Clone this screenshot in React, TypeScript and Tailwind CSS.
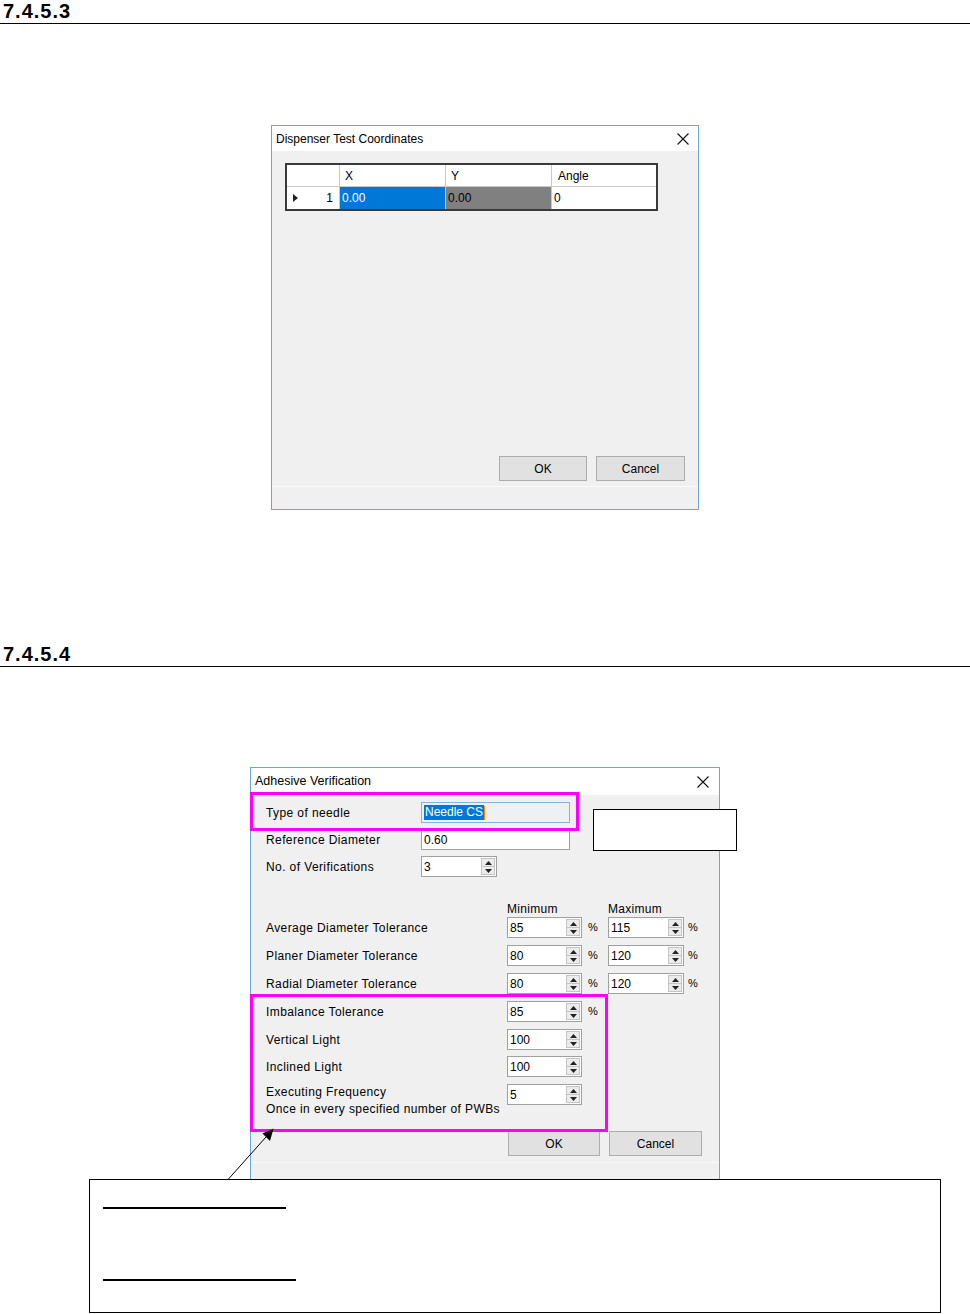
import React from "react"

const UI = { fontFamily: '"Liberation Sans", Arial, sans-serif' }

function CloseIcon() {
  return (
    <svg width="12" height="12" viewBox="0 0 12 12">
      <path d="M0.5 0.5 L11.5 11.5 M11.5 0.5 L0.5 11.5" stroke="#111" strokeWidth="1.1" />
    </svg>
  )
}

function Heading({ label }: { label: string }) {
  return (
    <div className="h-[24px] border-b border-black pt-[1px]">
      <div
        className="pl-[3px] text-[20px] font-bold leading-[21px] tracking-[1px] text-black"
        style={{ fontFamily: '"Liberation Sans", Arial, sans-serif' }}
      >
        {label}
      </div>
    </div>
  )
}

function WinButton({ label, w }: { label: string; w: string }) {
  return (
    <div
      className={`${w} flex h-[25px] items-center justify-center border border-[#adadad] bg-[#e1e1e1] text-[12px] text-black`}
    >
      {label}
    </div>
  )
}

function SpinArrows() {
  return (
    <div className="mr-[1px] flex h-[17px] w-[14px] flex-col border border-[#c4c4c4] bg-[#ececec]">
      <div className="flex flex-1 items-center justify-center border-b border-[#c4c4c4]">
        <svg width="7" height="4" viewBox="0 0 7 4">
          <polygon points="3.5,0 7,4 0,4" fill="#222" />
        </svg>
      </div>
      <div className="flex flex-1 items-center justify-center">
        <svg width="7" height="4" viewBox="0 0 7 4">
          <polygon points="0,0 7,0 3.5,4" fill="#222" />
        </svg>
      </div>
    </div>
  )
}

function Spin({ value, w }: { value: string; w: string }) {
  return (
    <div className={`${w} flex h-[21px] items-center justify-between border border-[#a0a0a0] bg-white`}>
      <span className="pl-[2px] text-[12px] leading-none text-black">{value}</span>
      <SpinArrows />
    </div>
  )
}

function TextBox({ value }: { value: string }) {
  return (
    <div className="flex h-[21px] w-[149px] items-center border border-[#a0a0a0] bg-white">
      <span className="pl-[2px] text-[12px] leading-none text-black">{value}</span>
    </div>
  )
}

function Label({ text, w }: { text: string; w: string }) {
  return <div className={`${w} shrink-0 text-[12px] tracking-[0.4px] text-black`}>{text}</div>
}

const TOL_ROWS = [
  { label: "Average Diameter Tolerance", min: "85", max: "115", mt: "mt-[1px]" },
  { label: "Planer Diameter Tolerance", min: "80", max: "120", mt: "mt-[7px]" },
  { label: "Radial Diameter Tolerance", min: "80", max: "120", mt: "mt-[7px]" },
]

export default function App() {
  return (
    <div className="relative h-[1314px] w-[970px] overflow-hidden bg-white" style={UI}>
      <Heading label="7.4.5.3" />

      {/* Dispenser Test Coordinates dialog */}
      <div className="ml-[271px] mt-[101px] flex h-[385px] w-[428px] flex-col border border-[#6aa6dc] bg-[#f0f0f0]">
        <div className="flex h-[25px] shrink-0 items-center justify-between bg-white pl-[4px] pr-[9px]">
          <span className="text-[12px] text-black">Dispenser Test Coordinates</span>
          <CloseIcon />
        </div>
        <div className="flex flex-1 flex-col">
          <div className="ml-[13px] mt-[12px] w-[373px] border-2 border-[#3a3a3a] bg-white text-[12px] text-black">
            <div className="flex h-[22px] border-b border-[#c8c8c8]">
              <div className="w-[53px] border-r border-[#c8c8c8]" />
              <div className="flex w-[106px] items-center border-r border-[#c8c8c8] pl-[5px]">X</div>
              <div className="flex w-[106px] items-center border-r border-[#c8c8c8] pl-[5px]">Y</div>
              <div className="flex flex-1 items-center pl-[6px]">Angle</div>
            </div>
            <div className="flex h-[22px]">
              <div className="flex w-[53px] items-center justify-between border-r border-[#c8c8c8] pl-[6px] pr-[6px]">
                <svg width="5" height="8" viewBox="0 0 5 8">
                  <polygon points="0,0 5,4 0,8" fill="#222" />
                </svg>
                <span>1</span>
              </div>
              <div className="flex w-[106px] items-center border-r border-[#c8c8c8] bg-[#0078d7] pl-[2px] text-white">0.00</div>
              <div className="flex w-[106px] items-center border-r border-[#c8c8c8] bg-[#808080] pl-[2px] text-black">0.00</div>
              <div className="flex flex-1 items-center pl-[2px]">0</div>
            </div>
          </div>
          <div className="flex-1" />
          <div className="flex justify-end gap-[9px] pr-[13px]">
            <WinButton label="OK" w="w-[88px]" />
            <WinButton label="Cancel" w="w-[89px]" />
          </div>
          <div className="mt-[5px] h-[23px] border-t border-[#fbfbfb]" />
        </div>
      </div>

      <div className="mt-[133px]">
        <Heading label="7.4.5.4" />
      </div>

      {/* Adhesive Verification dialog */}
      <div className="ml-[250px] mt-[100px] flex h-[412px] w-[470px] flex-col border border-b-0 border-[#6aa6dc] bg-[#f0f0f0]">
        <div className="flex h-[27px] shrink-0 items-center justify-between bg-white pl-[4px] pr-[10px]">
          <span className="text-[12.5px] text-black">Adhesive Verification</span>
          <CloseIcon />
        </div>
        <div className="flex flex-col pl-[15px]">
          <div className="mt-[7px] flex h-[21px] items-center">
            <Label text="Type of needle" w="w-[155px]" />
            <div className="flex h-[21px] w-[149px] items-center border border-[#7eb4ea] bg-[#eef1f4]">
              <span className="ml-[2px] bg-[#0078d7] px-[1px] text-[12px] leading-[15px] text-white">Needle CS</span>
              <span className="h-[14px] w-[1px] bg-[#ff8c00]" />
            </div>
          </div>
          <div className="mt-[6px] flex h-[21px] items-center">
            <Label text="Reference Diameter" w="w-[155px]" />
            <TextBox value="0.60" />
          </div>
          <div className="mt-[6px] flex h-[21px] items-center">
            <Label text="No. of Verifications" w="w-[155px]" />
            <Spin value="3" w="w-[76px]" />
          </div>

          <div className="mt-[25px] flex h-[14px] items-center text-[12px] tracking-[0.3px] text-black">
            <div className="w-[241px]" />
            <div className="w-[101px]">Minimum</div>
            <div>Maximum</div>
          </div>

          {TOL_ROWS.map((r) => (
            <div key={r.label} className={`${r.mt} flex h-[21px] items-center`}>
              <Label text={r.label} w="w-[241px]" />
              <Spin value={r.min} w="w-[75px]" />
              <div className="w-[26px] pl-[6px] text-[11px] text-black">%</div>
              <Spin value={r.max} w="w-[76px]" />
              <div className="pl-[4px] text-[11px] text-black">%</div>
            </div>
          ))}

          <div className="mt-[7px] flex h-[21px] items-center">
            <Label text="Imbalance Tolerance" w="w-[241px]" />
            <Spin value="85" w="w-[75px]" />
            <div className="pl-[6px] text-[11px] text-black">%</div>
          </div>
          <div className="mt-[7px] flex h-[21px] items-center">
            <Label text="Vertical Light" w="w-[241px]" />
            <Spin value="100" w="w-[75px]" />
          </div>
          <div className="mt-[6px] flex h-[21px] items-center">
            <Label text="Inclined Light" w="w-[241px]" />
            <Spin value="100" w="w-[75px]" />
          </div>
          <div className="mt-[7px] flex items-start">
            <div className="w-[241px] shrink-0 text-[12px] leading-[17px] tracking-[0.4px] text-black">
              <div>Executing Frequency</div>
              <div>Once in every specified number of PWBs</div>
            </div>
            <Spin value="5" w="w-[75px]" />
          </div>
        </div>
        <div className="mt-[13px] flex justify-end gap-[9px] pr-[17px]">
          <WinButton label="OK" w="w-[92px]" />
          <WinButton label="Cancel" w="w-[93px]" />
        </div>
        <div className="mt-[6px] flex-1 border-t border-[#fbfbfb]" />
      </div>

      {/* Annotation box */}
      <div className="ml-[89px] flex h-[134px] w-[852px] flex-col border border-black bg-white pl-[13px]">
        <div className="mt-[27px] h-[2px] w-[183px] bg-black" />
        <div className="mt-[70px] h-[2px] w-[193px] bg-black" />
      </div>

      {/* Overlays: magenta highlight frames, callout box, arrow */}
      <div className="absolute left-[250px] top-[792px] h-[39px] w-[329px] border-[3px] border-[#ff00ff]" />
      <div className="absolute left-[250px] top-[994px] h-[138px] w-[358px] border-[3px] border-[#ff00ff]" />
      <div className="absolute left-[593px] top-[809px] h-[42px] w-[144px] border border-black bg-white" />
      <svg className="absolute left-0 top-0" width="970" height="1314" viewBox="0 0 970 1314">
        <line x1="228.5" y1="1179" x2="266" y2="1137" stroke="#000" strokeWidth="1" />
        <polygon points="273.5,1128.5 262.5,1133.5 270,1141" fill="#000" />
      </svg>
    </div>
  )
}
